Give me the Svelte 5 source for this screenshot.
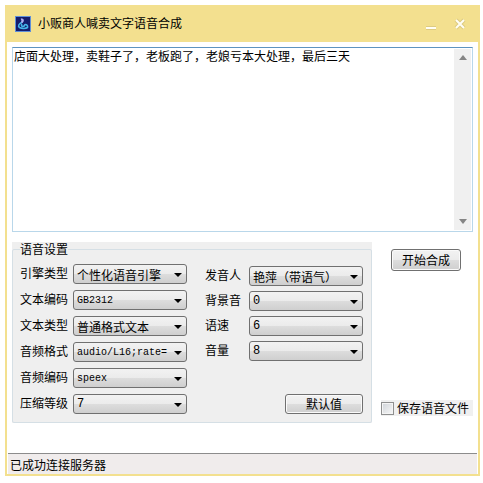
<script lang="ts">
    let text = "店面大处理，卖鞋子了，老板跑了，老娘亏本大处理，最后三天"
    let saveFile = false

    const formatFields = [
        { id: "engine", label: "引擎类型", value: "个性化语音引擎" },
        { id: "encoding", label: "文本编码", value: "GB2312" },
        { id: "text-type", label: "文本类型", value: "普通格式文本" },
        { id: "audio-format", label: "音频格式", value: "audio/L16;rate=" },
        { id: "audio-codec", label: "音频编码", value: "speex" },
        { id: "level", label: "压缩等级", value: "7" }
    ]

    const voiceFields = [
        { id: "speaker", label: "发音人", value: "艳萍（带语气）" },
        { id: "background", label: "背景音", value: "0" },
        { id: "speed", label: "语速", value: "6" },
        { id: "volume", label: "音量", value: "8" }
    ]
</script>

<div class="window">
    <header>
        <svg class="logo" viewBox="0 0 16 16" aria-hidden="true">
            <rect width="16" height="16" fill="#5f8fd8" />
            <rect x="1" y="1" width="14" height="14" fill="#141c6c" />
            <path d="M6 3.500C8.500 3 8 5.500 6.500 6.500C4 8 2.500 10 4.500 11.500C7 13 11 12.500 12.500 11.500C13 9.500 11.500 8.500 10.500 8.500C9 8.500 10 10.500 8 10.500C6.500 10.500 6 9 7 8" fill="none" stroke="#45b4e8" stroke-width="1.600" />
            <path d="M6 3.500C8.500 3 8 5.500 6.500 6.500" fill="none" stroke="#b3a9ee" stroke-width="2" />
        </svg>
        <h1>小贩商人喊卖文字语音合成</h1>
        <button class="title-btn" aria-label="最小化">
            <svg viewBox="0 0 12 12"><path d="M1 10h10" stroke="#ddcb82" stroke-width="4" /><path d="M1 10h10" stroke="#fffef5" stroke-width="2" /></svg>
        </button>
        <button class="title-btn" aria-label="关闭">
            <svg viewBox="0 0 12 12"><path d="M2 2l8 8M10 2l-8 8" stroke="#ddcb82" stroke-width="4" /><path d="M2 2l8 8M10 2l-8 8" stroke="#fffef5" stroke-width="2" /></svg>
        </button>
    </header>

    <main>
        <div class="editor">
            <textarea bind:value={text} aria-label="合成文本" spellcheck="false"></textarea>
            <div class="scrollbar">
                <button aria-label="向上滚动"><svg viewBox="0 0 8 5"><path d="M4 0l4 5H0z" /></svg></button>
                <button aria-label="向下滚动"><svg viewBox="0 0 8 5"><path d="M0 0h8L4 5z" /></svg></button>
            </div>
        </div>

        <div class="lower">
            <div class="group">
                <fieldset>
                    <legend>语音设置</legend>
                    <div class="columns">
                        <div class="fields left">
                            {#each formatFields as field}
                                <div class="field">
                                    <label for={field.id}>{field.label}</label>
                                    <select id={field.id}>
                                        <option>{field.value}</option>
                                    </select>
                                </div>
                            {/each}
                        </div>
                        <div class="fields right">
                            {#each voiceFields as field}
                                <div class="field">
                                    <label for={field.id}>{field.label}</label>
                                    <select id={field.id}>
                                        <option>{field.value}</option>
                                    </select>
                                </div>
                            {/each}
                            <button class="btn reset">默认值</button>
                        </div>
                    </div>
                </fieldset>
            </div>

            <div class="side">
                <button class="btn start">开始合成</button>
                <label class="save">
                    <input type="checkbox" bind:checked={saveFile}>
                    保存语音文件
                </label>
            </div>
        </div>
    </main>

    <footer>已成功连接服务器</footer>
</div>

<style>
    :global(body) {
        background: #fff;
    }
    .window, button, select, textarea {
        font-family: "Noto Sans CJK SC", sans-serif;
        font-size: 12px;
        color: #000;
    }
    .window {
        margin: 5px 3px 0 5px;
        border: 2px solid #f3e08f;
        border-top: none;
        background: #fff;
    }
    header {
        display: flex;
        align-items: center;
        height: 37px;
        padding: 0 12px 0 8px;
        background: #f3e08f;
    }
    .logo {
        width: 16px;
        height: 16px;
    }
    h1 {
        flex: 1;
        margin: 0 0 2px 7px;
        font-size: 12px;
        font-weight: normal;
        line-height: 16px;
    }
    .title-btn {
        width: 12px;
        height: 12px;
        margin-left: 17px;
        padding: 0;
        border: none;
        background: none;
    }
    .title-btn svg {
        display: block;
        width: 12px;
        height: 12px;
    }
    main {
        padding: 5px 5px 30px;
    }
    .editor {
        display: flex;
        height: 183px;
        border: 1px solid #b9d7ea;
        border-top-color: #5d93c0;
    }
    textarea {
        flex: 1;
        min-width: 0;
        padding: 0 1px;
        border: none;
        outline: none;
        resize: none;
        overflow: hidden;
        line-height: 16px;
    }
    .scrollbar {
        display: flex;
        flex-direction: column;
        justify-content: space-between;
        width: 17px;
        margin: 1px;
        background: #f0f0f0;
    }
    .scrollbar button {
        height: 17px;
        padding: 0;
        border: none;
        background: none;
    }
    .scrollbar svg {
        display: block;
        width: 8px;
        height: 5px;
        margin: 0 auto;
        fill: #858585;
    }
    .lower {
        display: flex;
        margin-top: 10px;
    }
    .group {
        flex: 1;
        background: #efefef;
    }
    fieldset {
        min-width: 0;
        margin: 0;
        padding: 0 8px 8px 7px;
        border: 1px solid #d5dfe5;
        border-radius: 2px;
    }
    legend {
        height: 14px;
        padding: 0;
        line-height: 14px;
    }
    .columns {
        display: flex;
        justify-content: space-between;
        padding-top: 8px;
    }
    .fields {
        display: flex;
        flex-direction: column;
    }
    .left {
        gap: 6px;
    }
    .right {
        gap: 5px;
        padding-top: 2px;
    }
    .field {
        display: flex;
        align-items: center;
    }
    .left label {
        width: 53px;
    }
    .right label {
        width: 44px;
    }
    .field label {
        height: 20px;
        line-height: 18px;
    }
    select {
        appearance: none;
        box-sizing: border-box;
        width: 114px;
        height: 20px;
        padding: 0 16px 0 3px;
        border: 1px solid #707070;
        border-radius: 3px;
        background:
            url("data:image/svg+xml,%3Csvg xmlns='http://www.w3.org/2000/svg' width='8' height='4'%3E%3Cpath d='M0 0h8L4 4z'/%3E%3C/svg%3E") no-repeat right 4px top 8px,
            linear-gradient(#f2f2f2, #ebebeb 50%, #dddddd 50%, #cfcfcf);
    }
    #encoding, #audio-format, #audio-codec {
        padding-top: 1px;
        font-family: "Liberation Mono", monospace;
        font-size: 10px;
    }
    #level, #background, #speed, #volume {
        font-family: "Liberation Mono", monospace;
    }
    .btn {
        padding: 0;
        border: 1px solid #707070;
        border-radius: 3px;
        background: linear-gradient(#f2f2f2, #ebebeb 50%, #dddddd 50%, #cfcfcf);
        box-shadow: inset 0 0 0 1px #fafafa;
        line-height: 16px;
    }
    .reset {
        align-self: flex-end;
        width: 78px;
        height: 20px;
        margin-top: auto;
    }
    .side {
        display: flex;
        flex-direction: column;
        justify-content: space-between;
        padding: 7px 0 7px 9px;
    }
    .start {
        width: 70px;
        height: 22px;
        margin-left: 10px;
    }
    .save {
        display: flex;
        align-items: center;
        gap: 3px;
        padding-right: 4px;
        background: #f0f0f0;
        line-height: 16px;
    }
    .save input {
        appearance: none;
        box-sizing: border-box;
        width: 13px;
        height: 13px;
        margin: 0;
        border: 1px solid #8e8f8f;
        background: linear-gradient(135deg, #cfd3d8, #f8f8f8);
        box-shadow: inset 0 0 0 1px #f4f4f4;
    }
    .save input:checked {
        background: #4a6fa5;
    }
    footer {
        margin: 0 1px;
        padding: 1px 2px 0;
        border-top: 1px solid #8c8c8c;
        background: #f0ecec;
        line-height: 19px;
    }
</style>
